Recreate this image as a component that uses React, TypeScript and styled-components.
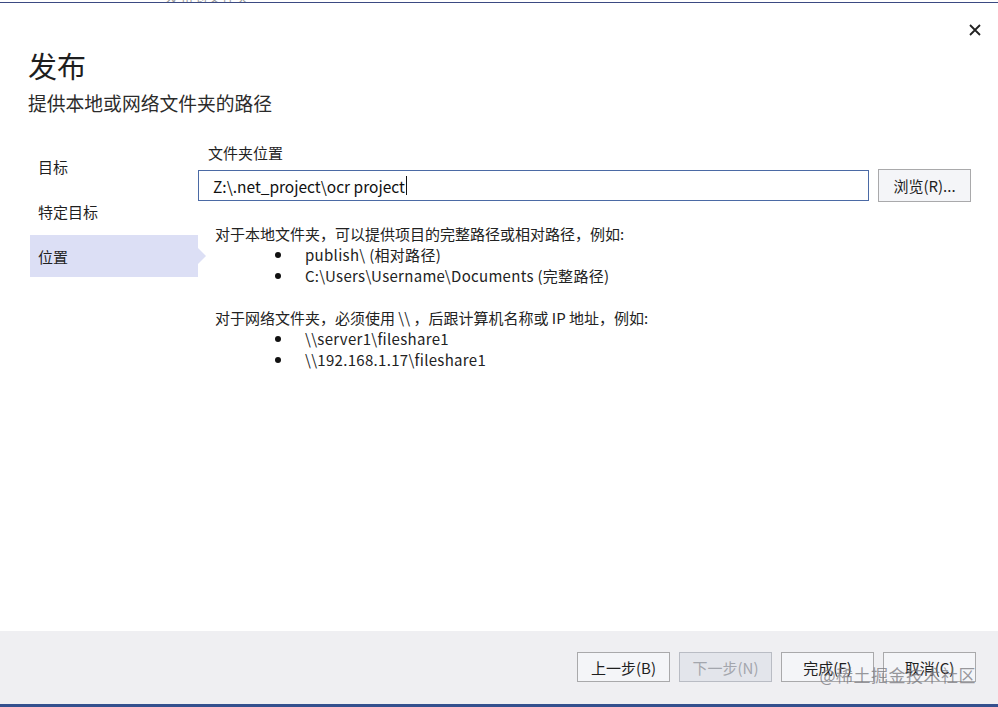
import React from "react";
import styled, { createGlobalStyle } from "styled-components";

const Global = createGlobalStyle`
  html, body { margin: 0; padding: 0; background: #ffffff; }
  body { font-family: "Noto Sans CJK SC", "Noto Sans", sans-serif; color: #1f1f1f; }
  * { box-sizing: border-box; }
`;

const Dialog = styled.div`
  width: 998px;
  height: 707px;
  display: flex;
  flex-direction: column;
  position: relative;
  background: #ffffff;
  overflow: hidden;
`;

const TopStrip = styled.div`
  height: 3px;
  border-bottom: 1px solid #3b4a82;
  overflow: hidden;
  padding-left: 166px;
`;

const ClippedCaption = styled.div`
  font-size: 13px;
  line-height: 13px;
  margin-top: -10px;
  color: #9a9a9a;
  letter-spacing: 1px;
`;

const Header = styled.div`
  position: relative;
  padding: 40px 28px 0 28px;
  height: 140px;
`;

const CloseButton = styled.button`
  position: absolute;
  top: 19px;
  right: 15px;
  width: 16px;
  height: 16px;
  padding: 0;
  border: none;
  background: transparent;
  display: flex;
  align-items: center;
  justify-content: center;
`;

const Title = styled.h1`
  margin: 0;
  font-size: 29px;
  font-weight: 400;
  line-height: 44px;
  color: #1e1e1e;
`;

const Subtitle = styled.div`
  margin-top: 3px;
  font-size: 18.8px;
  line-height: 26px;
  color: #2b2b2b;
`;

const Body = styled.div`
  display: flex;
  flex: 1;
  align-items: flex-start;
`;

const Nav = styled.nav`
  width: 198px;
  padding-left: 30px;
  padding-top: 2px;
  display: flex;
  flex-direction: column;
  gap: 3px;
`;

const NavItem = styled.div<{ $active?: boolean }>`
  position: relative;
  height: 42px;
  padding-left: 8px;
  display: flex;
  align-items: center;
  font-size: 15px;
  color: #1f1f1f;
  background: ${(p) => (p.$active ? "#dcdff5" : "transparent")};
  &::after {
    content: "";
    display: ${(p) => (p.$active ? "block" : "none")};
    position: absolute;
    right: -8px;
    top: 50%;
    margin-top: -8px;
    border-top: 8px solid transparent;
    border-bottom: 8px solid transparent;
    border-left: 8px solid #dcdff5;
  }
`;

const Content = styled.div`
  flex: 1;
  padding-right: 27px;
`;

const FieldLabel = styled.div`
  padding-left: 10px;
  font-size: 15px;
  line-height: 20px;
  color: #1f1f1f;
`;

const FieldRow = styled.div`
  margin-top: 6px;
  display: flex;
  align-items: center;
  gap: 9px;
`;

const PathInput = styled.div`
  flex: 1;
  height: 31px;
  border: 1px solid #4b6aa5;
  padding-left: 14px;
  display: flex;
  align-items: center;
  font-size: 15.5px;
  color: #111;
  background: #fff;
`;

const Caret = styled.span`
  display: inline-block;
  width: 1px;
  height: 19px;
  background: #111;
  margin-left: 1px;
`;

const Button = styled.button<{ $disabled?: boolean; $tall?: boolean }>`
  width: 93px;
  height: ${(p) => (p.$tall ? "33px" : "30px")};
  padding: 0;
  font-family: inherit;
  font-size: 15px;
  color: ${(p) => (p.$disabled ? "#a3a6ad" : "#1f1f1f")};
  background: ${(p) => (p.$disabled ? "#e3e5eb" : "#f4f5f8")};
  border: 1px solid ${(p) => (p.$disabled ? "#b9bcc4" : "#a9a9ab")};
  display: flex;
  align-items: center;
  justify-content: center;
`;

const Help = styled.div`
  margin-top: 21px;
  padding-left: 17px;
  font-size: 15px;
  line-height: 21px;
  color: #222;
`;

const BulletList = styled.ul`
  margin: 0 0 21px 0;
  padding: 0;
  list-style: none;
`;

const Bullet = styled.li`
  display: flex;
  align-items: center;
  padding-left: 60px;
  letter-spacing: 0.3px;
  &::before {
    content: "";
    width: 6px;
    height: 6px;
    border-radius: 50%;
    background: #111;
    margin-right: 24px;
  }
`;

const Footer = styled.div`
  height: 76px;
  background: #efeff2;
  border-bottom: 3px solid #34508e;
  display: flex;
  justify-content: flex-end;
  align-items: flex-start;
  padding-top: 21px;
  padding-right: 22px;
  gap: 9px;
`;

const Watermark = styled.div`
  position: absolute;
  right: 22px;
  bottom: 20px;
  font-size: 17px;
  color: rgba(120, 120, 125, 0.75);
  letter-spacing: 0.5px;
  pointer-events: none;
`;

export default function App() {
  return (
    <>
      <Global />
      <Dialog>
        <TopStrip>
          <ClippedCaption>发布到文件夹</ClippedCaption>
        </TopStrip>
        <Header>
          <CloseButton aria-label="关闭">
            <svg width="12" height="12" viewBox="0 0 12 12">
              <path d="M1 1 L11 11 M11 1 L1 11" stroke="#222" strokeWidth="1.8" />
            </svg>
          </CloseButton>
          <Title>发布</Title>
          <Subtitle>提供本地或网络文件夹的路径</Subtitle>
        </Header>
        <Body>
          <Nav>
            <NavItem>目标</NavItem>
            <NavItem>特定目标</NavItem>
            <NavItem $active>位置</NavItem>
          </Nav>
          <Content>
            <FieldLabel>文件夹位置</FieldLabel>
            <FieldRow>
              <PathInput>
                Z:\.net_project\ocr project
                <Caret />
              </PathInput>
              <Button $tall>浏览(R)...</Button>
            </FieldRow>
            <Help>
              <div>对于本地文件夹，可以提供项目的完整路径或相对路径，例如:</div>
              <BulletList>
                <Bullet>publish\ (相对路径)</Bullet>
                <Bullet>C:\Users\Username\Documents (完整路径)</Bullet>
              </BulletList>
              <div>对于网络文件夹，必须使用 \\ ，后跟计算机名称或 IP 地址，例如:</div>
              <BulletList>
                <Bullet>\\server1\fileshare1</Bullet>
                <Bullet>\\192.168.1.17\fileshare1</Bullet>
              </BulletList>
            </Help>
          </Content>
        </Body>
        <Footer>
          <Button>上一步(B)</Button>
          <Button $disabled>下一步(N)</Button>
          <Button>完成(F)</Button>
          <Button>取消(C)</Button>
        </Footer>
        <Watermark>@稀土掘金技术社区</Watermark>
      </Dialog>
    </>
  );
}
